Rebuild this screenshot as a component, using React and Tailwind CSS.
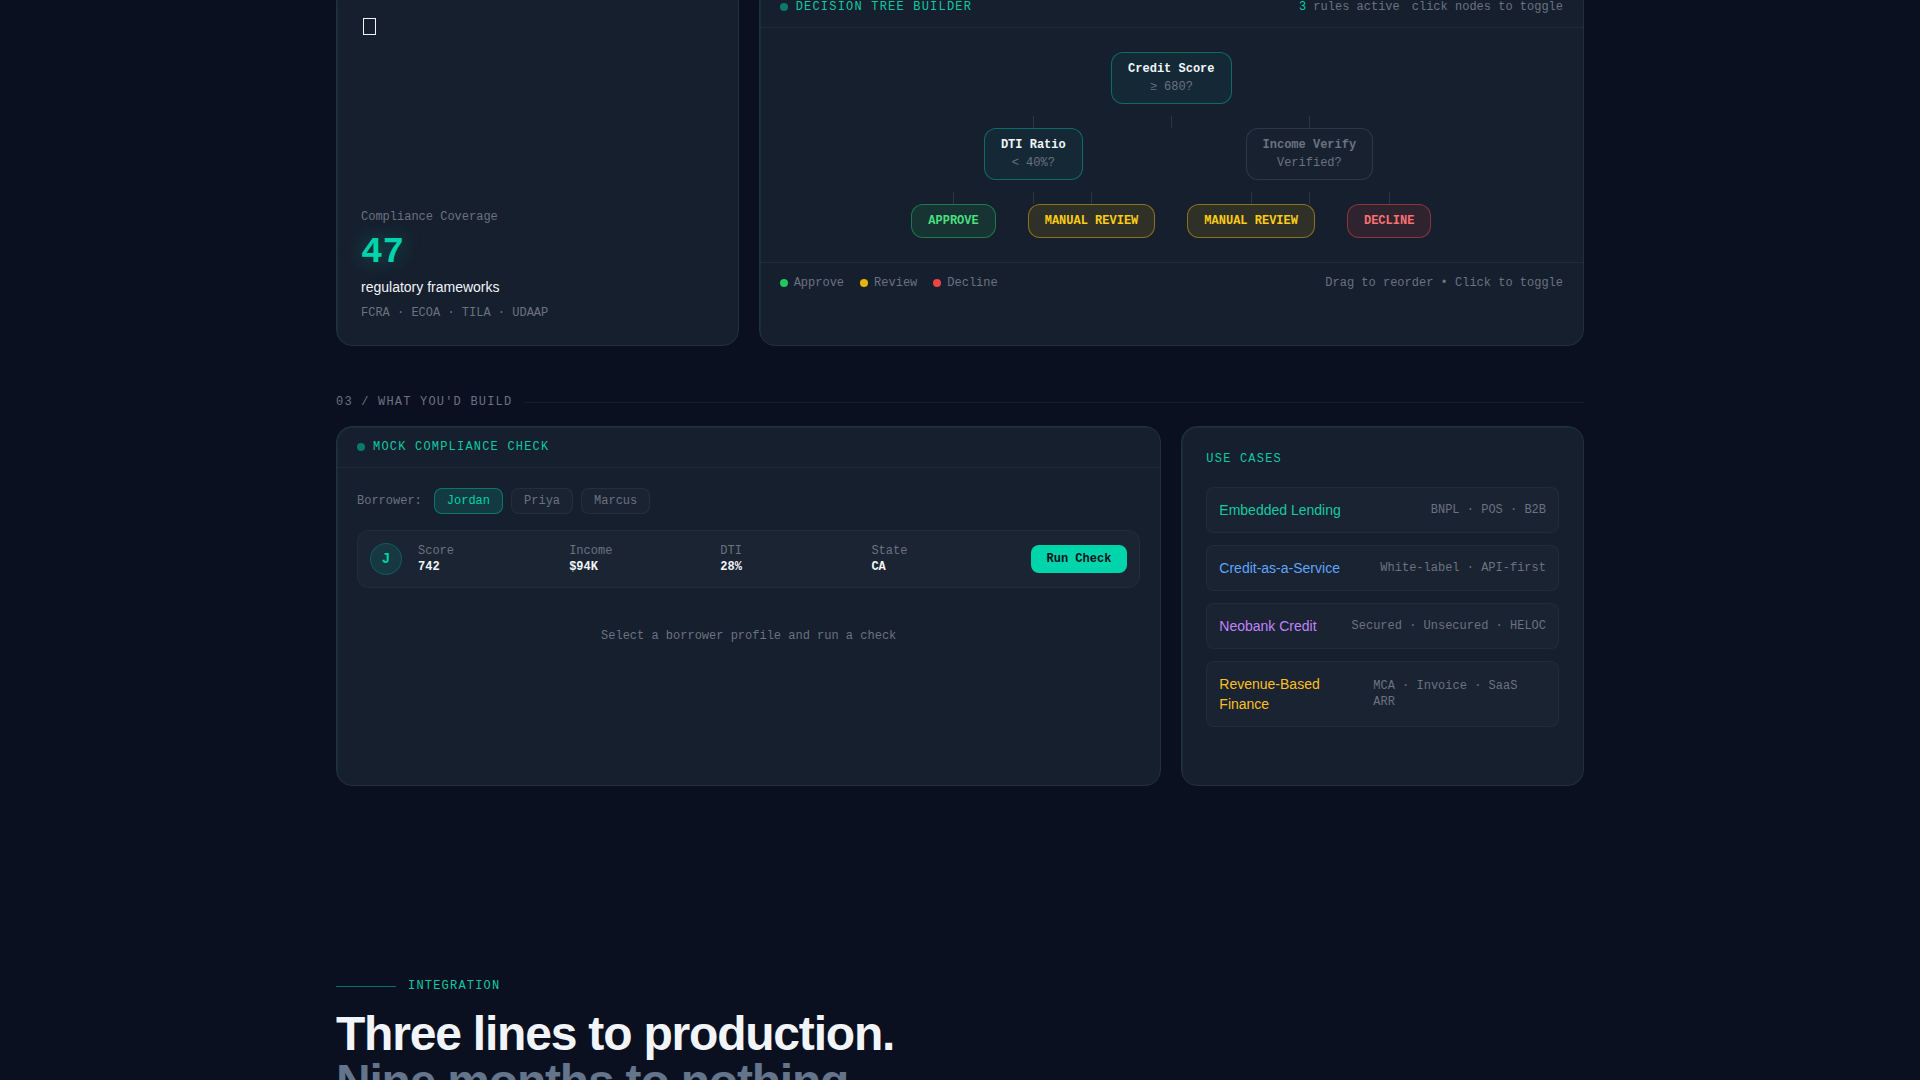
import { useState } from 'react';

const borrowers = [
  { name: 'Jordan', score: '742', income: '$94K', dti: '28%', state: 'CA' },
  { name: 'Priya', score: '691', income: '$72K', dti: '35%', state: 'NY' },
  { name: 'Marcus', score: '598', income: '$48K', dti: '46%', state: 'TX' },
];

const useCases = [
  { name: 'Embedded Lending', tags: 'BNPL · POS · B2B', cls: 'text-[#14cba2]' },
  { name: 'Credit-as-a-Service', tags: 'White-label · API-first', cls: 'text-[#60a5fa]' },
  { name: 'Neobank Credit', tags: 'Secured · Unsecured · HELOC', cls: 'text-[#c084fc]' },
  { name: 'Revenue-Based Finance', tags: 'MCA · Invoice · SaaS ARR', cls: 'text-[#fbbf24]' },
];

const legend = [
  { label: 'Approve', dot: 'bg-[#22c55e]' },
  { label: 'Review', dot: 'bg-[#eab308]' },
  { label: 'Decline', dot: 'bg-[#ef4444]' },
];

const leafConfig = {
  approve: { label: 'APPROVE', cls: 'bg-[#22c55e]/12 border-[#22c55e]/50 text-[#4ade80]' },
  review: { label: 'MANUAL REVIEW', cls: 'bg-[#eab308]/12 border-[#eab308]/50 text-[#facc15]' },
  decline: { label: 'DECLINE', cls: 'bg-[#ef4444]/12 border-[#ef4444]/50 text-[#f87171]' },
};

const Card = ({ className = '', children }) => (
  <div className={`overflow-hidden rounded-2xl border border-[#233040] bg-[#161f2e] shadow-[inset_1px_1px_0_rgba(0,212,170,0.08)] ${className}`}>
    {children}
  </div>
);

const CardHeader = ({ title, children }) => (
  <div className="flex items-center justify-between border-b border-white/5 px-5 py-3">
    <div className="flex items-center gap-2">
      <span className="h-2 w-2 rounded-full bg-[#00d4aa]/50" />
      <h3 className="tracking-widest text-[#10c9a2] uppercase">{title}</h3>
    </div>
    {children}
  </div>
);

const RuleNode = ({ title, rule, active, onClick }) => (
  <button
    type="button"
    onClick={onClick}
    className={`rounded-xl border px-4 py-2 text-center ${
      active ? 'border-[#00d4aa]/40 bg-[#00d4aa]/6 text-slate-100' : 'border-white/10 bg-white/1 text-[#6b7280]'
    }`}
  >
    <span className="block font-bold">{title}</span>
    <span className="mt-0.5 block text-[#6b7280]">{rule}</span>
  </button>
);

const Leaf = ({ type }) => (
  <div className={`rounded-xl border px-4 py-2 font-bold ${leafConfig[type].cls}`}>{leafConfig[type].label}</div>
);

const Connector = () => <span className="h-3 w-px bg-white/10" />;

// A row of child branches, with the stem of the parent above its middle
const Branches = ({ items }) => (
  <div className="relative mt-3 flex gap-8">
    <span className="absolute top-0 left-1/2 h-3 w-px bg-white/10" />
    {items.map((item, idx) => (
      <div key={idx} className="flex flex-col items-center">
        <Connector />
        {item}
      </div>
    ))}
  </div>
);

const DecisionTree = () => {
  const [active, setActive] = useState({ score: true, dti: true, income: false });
  const toggle = (id) => setActive({ ...active, [id]: !active[id] });

  return (
    <Card className="col-span-2">
      <CardHeader title="Decision Tree Builder">
        <div className="flex gap-3 text-[#6b7280]">
          <span><span className="text-[#00d4aa]">3</span> rules active</span>
          <span>click nodes to toggle</span>
        </div>
      </CardHeader>

      <div className="flex flex-col items-center p-6">
        <RuleNode title="Credit Score" rule="≥ 680?" active={active.score} onClick={() => toggle('score')} />
        <Branches
          items={[
            <>
              <RuleNode title="DTI Ratio" rule="< 40%?" active={active.dti} onClick={() => toggle('dti')} />
              <Branches items={[<Leaf type="approve" />, <Leaf type="review" />]} />
            </>,
            <>
              <RuleNode title="Income Verify" rule="Verified?" active={active.income} onClick={() => toggle('income')} />
              <Branches items={[<Leaf type="review" />, <Leaf type="decline" />]} />
            </>,
          ]}
        />
      </div>

      <div className="flex items-center justify-between border-t border-white/5 px-5 py-3 text-[#6b7280]">
        <div className="flex gap-4">
          {legend.map((item) => (
            <span key={item.label} className="flex items-center gap-1.5">
              <span className={`h-2 w-2 rounded-full ${item.dot}`} />
              {item.label}
            </span>
          ))}
        </div>
        <span>Drag to reorder • Click to toggle</span>
      </div>
    </Card>
  );
};

const ComplianceCheck = () => {
  const [selected, setSelected] = useState(borrowers[0]);
  const stats = [
    ['Score', selected.score],
    ['Income', selected.income],
    ['DTI', selected.dti],
    ['State', selected.state],
  ];

  return (
    <Card className="col-span-2">
      <CardHeader title="Mock Compliance Check" />
      <div className="p-5">
        <div className="mb-4 flex items-center gap-3">
          <span className="text-[#6b7280]">Borrower:</span>
          <div className="flex gap-2">
            {borrowers.map((b) => (
              <button
                key={b.name}
                type="button"
                onClick={() => setSelected(b)}
                className={`rounded-lg border px-3 py-1 ${
                  b.name === selected.name
                    ? 'border-[#00d4aa]/40 bg-[#00d4aa]/15 text-[#00d4aa]'
                    : 'border-white/5 bg-white/2 text-[#6b7280]'
                }`}
              >
                {b.name}
              </button>
            ))}
          </div>
        </div>

        <div className="flex items-center gap-4 rounded-xl border border-white/4 bg-[#1a2433] p-3">
          <div className="flex h-8 w-8 items-center justify-center rounded-full border border-[#00d4aa]/20 bg-[#00d4aa]/12 text-sm font-bold text-[#00d4aa]">
            {selected.name[0]}
          </div>
          <dl className="grid flex-1 grid-cols-4 gap-2">
            {stats.map(([label, value]) => (
              <div key={label}>
                <dt className="text-[#6b7280]">{label}</dt>
                <dd className="font-bold text-slate-100">{value}</dd>
              </div>
            ))}
          </dl>
          <button type="button" className="rounded-lg bg-[#00d4aa] px-4 py-1.5 font-bold text-[#0b1020]">
            Run Check
          </button>
        </div>

        <p className="py-10 text-center text-[#6b7280]">Select a borrower profile and run a check</p>
      </div>
    </Card>
  );
};

const App = () => (
  <div className="h-screen overflow-hidden bg-[#0a101f] font-['Liberation_Mono',monospace] text-xs text-slate-100">
    <main className="mx-auto -mt-3.5 max-w-7xl px-4">
      <section className="grid auto-rows-[360px] grid-cols-3 gap-5">
        <Card className="flex flex-col justify-between p-6">
          {/* Empty glyph box */}
          <svg className="mt-1.5 h-6 w-5" viewBox="0 0 20 24" fill="none" stroke="#f1f5f9" aria-hidden="true">
            <rect x="2.5" y="1.5" width="12" height="16" />
          </svg>
          <div>
            <p className="mb-2 text-[#6b7280]">Compliance Coverage</p>
            <p className="mb-1 text-4xl font-bold text-[#00d4aa] text-shadow-[0_0_20px_rgba(0,212,170,0.4)]">47</p>
            <p className="mb-2 font-['Liberation_Sans',sans-serif] text-sm">regulatory frameworks</p>
            <p className="text-[#6b7280]">FCRA · ECOA · TILA · UDAAP</p>
          </div>
        </Card>
        <DecisionTree />
      </section>

      <section className="mt-12">
        <div className="mb-4 flex items-center gap-3">
          <h2 className="tracking-widest text-[#6b7280] uppercase">03 / What you'd build</h2>
          <span className="h-px flex-1 bg-white/5" />
        </div>
        <div className="grid auto-rows-[360px] grid-cols-3 gap-5">
          <ComplianceCheck />
          <Card className="p-6">
            <h3 className="mb-5 tracking-widest text-[#10c9a2] uppercase">Use cases</h3>
            <ul className="flex flex-col gap-3">
              {useCases.map((item) => (
                <li key={item.name} className="flex items-center justify-between rounded-lg border border-white/4 bg-white/2 p-3">
                  <span className={`font-['Liberation_Sans',sans-serif] text-sm ${item.cls}`}>{item.name}</span>
                  <span className="text-[#6b7280]">{item.tags}</span>
                </li>
              ))}
            </ul>
          </Card>
        </div>
      </section>

      <section className="mt-48">
        <div className="mb-4 flex items-center gap-3">
          <span className="h-px w-15 bg-[#00d4aa]/50" />
          <span className="tracking-widest text-[#10c9a2] uppercase">Integration</span>
        </div>
        <h2 className="font-['Liberation_Sans',sans-serif] text-5xl leading-none font-bold tracking-tight">
          Three lines to production.
          <span className="block text-[#64748b]">Nine months to nothing.</span>
        </h2>
      </section>
    </main>
  </div>
);

export default App;
